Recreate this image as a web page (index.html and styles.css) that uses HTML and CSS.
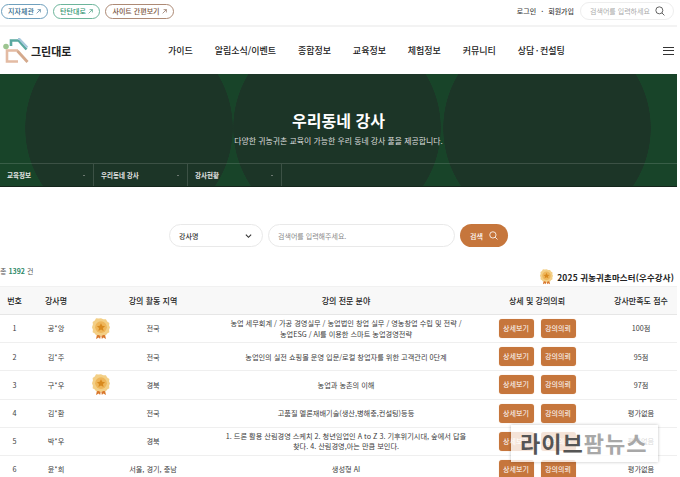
FILE: index.html

```html
<!DOCTYPE html>
<html lang="ko">
<head>
<meta charset="utf-8">
<meta name="viewport" content="width=device-width, initial-scale=1.0">
<title>우리동네 강사</title>
<link rel="stylesheet" href="styles.css">
</head>
<body>
<svg class="defs" width="0" height="0">
  <symbol id="medal" viewBox="0 0 20 24">
    <path d="M6 16 4.500 23l3-1.500L9 23l1-5 1 5 1.500-1.500 3 1.500L14 16z" fill="#d9782d"/>
    <path d="M10 0l2.600 1.300 2.900-.2 1.400 2.500 2.400 1.600-.3 2.900L20 10l-1 2.700.3 2.900-2.400 1.300-1.400 2-2.900-.2L10 20l-2.600-1.300-2.900.2-1.400-2-2.400-1.300.3-2.900L0 10l1-2.900-.3-2.900 2.400-1.600 1.400-2.500 2.900.2z" fill="#f3cf86"/>
    <circle cx="10" cy="10" r="6.500" fill="#eeb65a"/>
    <path d="M10 5.500l1.400 3 3.200.4-2.400 2.100.7 3.100-2.900-1.600-2.900 1.600.7-3.100-2.400-2.100 3.200-.4z" fill="#d88a1f"/>
  </symbol>
  <symbol id="arrow" viewBox="0 0 8 8">
    <path d="M1 7 7 1M2.500 1H7v4.500" fill="none" stroke="currentColor" stroke-width="1"/>
  </symbol>
  <symbol id="search" viewBox="0 0 12 12">
    <circle cx="5.200" cy="5.200" r="4.200" fill="none" stroke="currentColor" stroke-width="1.100"/>
    <path d="M8.300 8.300 11.300 11.300" stroke="currentColor" stroke-width="1.100"/>
  </symbol>
</svg>

<div class="page">
  <div class="topbar">
    <div class="pills">
      <a class="pill pill_blue">지자체관 <svg class="arrow"><use href="#arrow"/></svg></a>
      <a class="pill pill_green">탄탄대로 <svg class="arrow"><use href="#arrow"/></svg></a>
      <a class="pill pill_brown">사이트 간편보기 <svg class="arrow"><use href="#arrow"/></svg></a>
    </div>
    <div class="util">
      <a>로그인</a>
      <span class="util_dot">·</span>
      <a>회원가입</a>
      <div class="top_search">
        <span>검색어를 입력하세요</span>
        <svg class="top_search_icon"><use href="#search"/></svg>
      </div>
    </div>
  </div>

  <div class="nav">
    <div class="logo">
      <svg class="logo_mark" viewBox="0 0 26 26">
        <path d="M8 8V2.500h7.500l8 9" fill="none" stroke="#5aa9a0" stroke-width="2.600"/>
        <path d="M15 1h1.500l8 8.500" fill="none" stroke="#a9c9dc" stroke-width="2"/>
        <path d="M15 12.500H4v11h11" fill="none" stroke="#e3bba3" stroke-width="2.600"/>
        <path d="M14.500 13l10 11" fill="none" stroke="#d4a98c" stroke-width="2.800"/>
        <circle cx="3" cy="8.500" r="2.800" fill="#9cc490"/>
      </svg>
      <span>그린대로</span>
    </div>
    <ul class="menu">
      <li>가이드</li>
      <li>알림소식/이벤트</li>
      <li>종합정보</li>
      <li>교육정보</li>
      <li>체험정보</li>
      <li>커뮤니티</li>
      <li class="menu_last">상담 · 컨설팅</li>
    </ul>
    <div class="burger"><i></i><i></i><i></i></div>
  </div>

  <div class="hero">
    <div class="hero_text">
      <h1>우리동네 강사</h1>
      <p>다양한 귀농귀촌 교육이 가능한 우리 동네 강사 풀을 제공합니다.</p>
    </div>
    <div class="crumbs">
      <div class="crumb">교육정보<b class="caret"></b></div>
      <div class="crumb">우리동네 강사<b class="caret"></b></div>
      <div class="crumb">강사현황<b class="caret"></b></div>
    </div>
  </div>

  <div class="searchrow">
    <div class="sel">강사명
      <svg class="sel_icon" viewBox="0 0 8 6"><path d="M1 1.500 4 4.500 7 1.500" fill="none" stroke="#333" stroke-width="1.300"/></svg>
    </div>
    <div class="keyword">검색어를 입력해주세요.</div>
    <div class="search_btn">검색 <svg class="search_btn_icon"><use href="#search"/></svg></div>
  </div>

  <div class="summary">
    <div class="total">총 <b>1392</b> 건</div>
    <div class="master"><svg class="medal_small"><use href="#medal"/></svg>2025 귀농귀촌마스터(우수강사)</div>
  </div>

  <table class="list">
    <colgroup>
      <col class="c_no"><col class="c_name"><col class="c_area"><col class="c_field"><col class="c_act"><col class="c_score">
    </colgroup>
    <thead>
      <tr><th>번호</th><th>강사명</th><th>강의 활동 지역</th><th>강의 전문 분야</th><th>상세 및 강의의뢰</th><th>강사만족도 점수</th></tr>
    </thead>
    <tbody>
      <tr>
        <td>1</td>
        <td class="name">공*앙<svg class="medal"><use href="#medal"/></svg></td>
        <td>전국</td>
        <td>농업 세무회계 / 가공 경영실무 / 농업법인 창업 실무 / 영농창업 수립 및 전략 /<br>농업ESG / AI를 이용한 스마트 농업경영전략</td>
        <td><a class="btn">상세보기</a><a class="btn">강의의뢰</a></td>
        <td>100점</td>
      </tr>
      <tr>
        <td>2</td>
        <td class="name">김*주</td>
        <td>전국</td>
        <td>농업인의 실전 쇼핑몰 운영 입문/로컬 창업자를 위한 고객관리 0단계</td>
        <td><a class="btn">상세보기</a><a class="btn">강의의뢰</a></td>
        <td>95점</td>
      </tr>
      <tr>
        <td>3</td>
        <td class="name">구*우<svg class="medal"><use href="#medal"/></svg></td>
        <td>경북</td>
        <td>농업과 농촌의 이해</td>
        <td><a class="btn">상세보기</a><a class="btn">강의의뢰</a></td>
        <td>97점</td>
      </tr>
      <tr>
        <td>4</td>
        <td class="name">김*환</td>
        <td>전국</td>
        <td>고품질 멜론재배기술(생산,병해충,컨설팅)등등</td>
        <td><a class="btn">상세보기</a><a class="btn">강의의뢰</a></td>
        <td>평가없음</td>
      </tr>
      <tr>
        <td>5</td>
        <td class="name">박*우</td>
        <td>경북</td>
        <td>1. 드론 활용 산림경영 스케치 2. 청년임업인 A to Z 3. 기후위기시대, 숲에서 답을<br>찾다. 4. 산림경영,아는 만큼 보인다.</td>
        <td><a class="btn">상세보기</a><a class="btn">강의의뢰</a></td>
        <td>평가없음</td>
      </tr>
      <tr>
        <td>6</td>
        <td class="name">윤*희</td>
        <td>서울, 경기, 충남</td>
        <td>생성형 AI</td>
        <td><a class="btn">상세보기</a><a class="btn">강의의뢰</a></td>
        <td>평가없음</td>
      </tr>
    </tbody>
  </table>
</div>

<div class="stamp"><span class="stamp_dark">라이브</span><span class="stamp_light">팜뉴스</span></div>
</body>
</html>
```

FILE: styles.css

```css
html, body {
    margin: 0;
    padding: 0;
    height: 477px;
    overflow: hidden;
    background-color: white;
}
body {
    position: relative;
    font-family: "Noto Sans CJK KR", "Noto Sans", sans-serif;
    font-size: 7px;
    color: #333;
}
a {
    text-decoration: none;
}
.defs {
    display: block;
    height: 0;
}
.page {
    width: 677px;
}

/* top bar */
.topbar {
    display: flex;
    justify-content: space-between;
    align-items: center;
    height: 27px;
    box-sizing: border-box;
    padding: 0 3px 3px 1px;
    border-bottom: 2px solid #f3f3f3;
}
.pills {
    display: flex;
    gap: 5px;
}
.pill {
    display: flex;
    align-items: center;
    justify-content: center;
    gap: 2px;
    height: 15px;
    box-sizing: border-box;
    border: 1px solid;
    border-radius: 8px;
    font-size: 7px;
    font-weight: 500;
    line-height: 1;
    white-space: nowrap;
}
.pill_blue {
    width: 47px;
    color: #2f6a8c;
    border-color: #6fa0bd;
}
.pill_green {
    width: 47px;
    color: #2f9470;
    border-color: #6db59b;
}
.pill_brown {
    width: 69px;
    color: #7c5641;
    border-color: #ad8a75;
}
.arrow {
    width: 5px;
    height: 5px;
}
.util {
    display: flex;
    align-items: center;
    font-size: 7px;
    font-weight: 500;
    color: #444;
    white-space: nowrap;
}
.util_dot {
    margin: 0 5px;
}
.top_search {
    display: flex;
    align-items: center;
    justify-content: space-between;
    width: 94px;
    height: 18px;
    box-sizing: border-box;
    margin-left: 6px;
    padding: 0 8px 0 9px;
    border: 1px solid #eee;
    border-radius: 9px;
    color: #aaa;
    font-weight: 400;
}
.top_search_icon {
    width: 10px;
    height: 10px;
    color: #555;
}

/* main nav */
.nav {
    display: flex;
    align-items: center;
    height: 47px;
    padding: 0 3px;
    box-sizing: border-box;
}
.logo {
    display: flex;
    align-items: center;
    gap: 2px;
    width: 165px;
    font-size: 11px;
    font-weight: 700;
    color: #222;
}
.logo_mark {
    width: 26px;
    height: 26px;
}
.menu {
    display: flex;
    gap: 21.800px;
    margin: 0;
    padding: 0;
    list-style: none;
    font-size: 9px;
    font-weight: 500;
    color: #222;
}
.menu_last {
    word-spacing: -1px;
}
.burger {
    display: flex;
    flex-direction: column;
    gap: 2.500px;
    width: 11px;
    margin-left: auto;
}
.burger i {
    display: block;
    height: 1px;
    background-color: #333;
}

/* hero */
.hero {
    display: flex;
    flex-direction: column;
    height: 113px;
    color: white;
    background-color: #184429;
    background-image:
        radial-gradient(circle 104px at 129px 54px, #1c3527 99.500%, transparent 100%),
        radial-gradient(circle 104px at 337px 54px, #1c3527 99.500%, transparent 100%),
        radial-gradient(circle 104px at 547px 54px, #1c3527 99.500%, transparent 100%);
}
.hero_text {
    flex: 1;
    display: flex;
    flex-direction: column;
    align-items: center;
    padding-top: 35px;
}
.hero h1 {
    margin: 0;
    font-size: 16px;
    font-weight: 700;
    line-height: 22px;
}
.hero p {
    margin: 4px 0 0;
    font-size: 7.900px;
    line-height: 12px;
    color: #ddd;
}
.crumbs {
    display: flex;
    height: 24px;
    border-top: 1px solid rgba(255,255,255,0.14);
    border-bottom: 1px solid #14261b;
    box-sizing: border-box;
}
.crumb {
    display: flex;
    align-items: center;
    justify-content: space-between;
    width: 94px;
    box-sizing: border-box;
    padding: 0 8px 0 7px;
    border-right: 1px solid rgba(255,255,255,0.14);
    font-size: 6.500px;
    font-weight: 700;
    color: #e4e4e4;
}
.caret {
    width: 0;
    height: 0;
    border-left: 1.500px solid transparent;
    border-right: 1.500px solid transparent;
    border-top: 1.500px solid #bbb;
}

/* search */
.searchrow {
    display: flex;
    justify-content: center;
    gap: 5px;
    height: 23px;
    margin-top: 37px;
}
.sel, .keyword {
    display: flex;
    align-items: center;
    box-sizing: border-box;
    border: 1px solid #e9e9e9;
    border-radius: 12px;
}
.sel {
    justify-content: space-between;
    width: 94px;
    padding: 0 10px 0 9px;
    font-weight: 500;
}
.sel_icon {
    width: 7px;
    height: 6px;
}
.keyword {
    width: 187px;
    padding: 0 9px;
    color: #888;
}
.search_btn {
    display: flex;
    align-items: center;
    justify-content: space-between;
    width: 48px;
    box-sizing: border-box;
    padding: 0 10px;
    border-radius: 12px;
    background-color: #c6763c;
    color: white;
    font-weight: 500;
}
.search_btn_icon {
    width: 9px;
    height: 9px;
}

/* list */
.summary {
    display: flex;
    justify-content: space-between;
    height: 24px;
    margin-top: 15px;
    padding-right: 3px;
}
.total {
    font-size: 7px;
    line-height: 18px;
    color: #555;
}
.total b {
    color: #2f8a68;
}
.master {
    display: flex;
    align-items: center;
    gap: 4px;
    height: 16px;
    margin-top: 7px;
    font-size: 8.400px;
    font-weight: 700;
    letter-spacing: 0.2px;
    color: #222;
}
.medal_small {
    width: 13px;
    height: 16px;
}
.list {
    width: 677px;
    table-layout: fixed;
    border-collapse: collapse;
}
.c_no { width: 29px; }
.c_name { width: 54px; }
.c_area { width: 140px; }
.c_field { width: 246px; }
.c_act { width: 136px; }
.list th {
    height: 27px;
    padding: 0;
    background-color: #f8f8f8;
    border-top: 1px solid #f1f1f1;
    border-bottom: 1px solid #e6e6e6;
    font-size: 8px;
    font-weight: 500;
    color: #222;
}
.list td {
    height: 27.200px;
    padding: 0;
    border-bottom: 1px solid #efefef;
    text-align: center;
    font-size: 7.200px;
    line-height: 10.500px;
    color: #3c3c3c;
}
.list td.name {
    position: relative;
}
.medal {
    position: absolute;
    left: 63px;
    top: 3px;
    width: 18px;
    height: 22px;
}
.btn {
    display: inline-block;
    width: 35px;
    height: 19px;
    margin: 0 3.500px;
    border-radius: 3px;
    background-color: #c6763c;
    box-shadow: 0 0 1px #e8b994;
    color: white;
    font-size: 7px;
    line-height: 19px;
    vertical-align: middle;
}

/* watermark over the table */
.stamp {
    position: absolute;
    left: 511px;
    top: 425px;
    width: 147px;
    height: 37px;
    box-sizing: border-box;
    padding-left: 9px;
    background-color: rgba(255,255,255,0.8);
    box-shadow: 0 0 3px rgba(0,0,0,0.25);
    font-size: 22px;
    font-weight: 700;
    line-height: 35px;
    letter-spacing: 1px;
    white-space: nowrap;
}
.stamp_dark {
    color: #555;
}
.stamp_light {
    color: #a8a8a8;
}
```
